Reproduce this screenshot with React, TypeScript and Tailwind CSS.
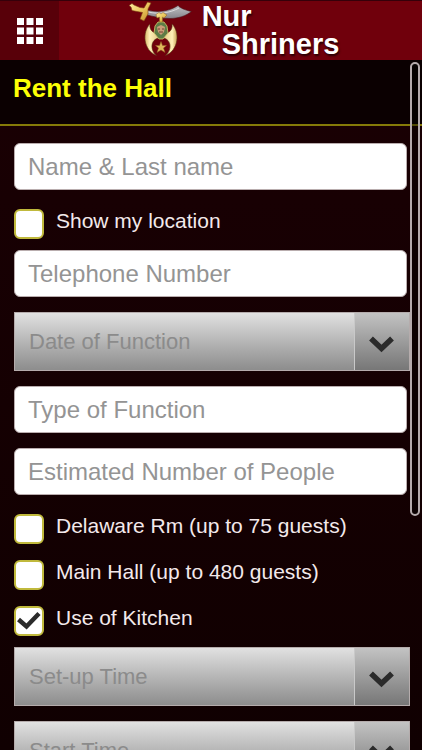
import { useState } from "react";

function MenuIcon() {
  return (
    <svg viewBox="0 0 26 26" className="size-[26px]" fill="#fff" aria-hidden="true">
      {[0, 9.5, 19].map((y) =>
        [0, 9.5, 19].map((x) => <rect key={`${x}-${y}`} x={x} y={y} width="7" height="7" />)
      )}
    </svg>
  );
}

function Emblem() {
  return (
    <svg viewBox="0 0 66 60" className="h-[60px] w-[66px] shrink-0" aria-hidden="true">
      <defs>
        <linearGradient id="gold" x1="0" y1="0" x2="1" y2="1">
          <stop offset="0" stopColor="#fff0a8" />
          <stop offset="0.5" stopColor="#eac65c" />
          <stop offset="1" stopColor="#c08a28" />
        </linearGradient>
        <linearGradient id="steel" x1="0" y1="0" x2="0" y2="1">
          <stop offset="0" stopColor="#b9b9bd" />
          <stop offset="0.5" stopColor="#a3a3a8" />
          <stop offset="1" stopColor="#85838a" />
        </linearGradient>
        <linearGradient id="horn" x1="0" y1="0" x2="1" y2="0">
          <stop offset="0" stopColor="#d9b76a" />
          <stop offset="0.15" stopColor="#fff0b8" />
          <stop offset="0.5" stopColor="#dcc078" />
          <stop offset="0.85" stopColor="#fff0b8" />
          <stop offset="1" stopColor="#c9a256" />
        </linearGradient>
      </defs>
      <path d="M19 9C30 12 42 10 50 4.500C52 7 57 9 63.500 10.500C58 15 50 17.500 42 17.500C33 17.500 25 15.500 19 14Z" fill="url(#steel)" stroke="#4a1018" strokeWidth=".6" />
      <path d="M20 11C31 13.500 42 12 51 7" fill="none" stroke="#dadade" strokeWidth="1" />
      <path d="M1 4.500L4 2.500L6 4L12 6.500L16 7L19.500 1L23 2L20 8L20 13L16 20L12 18L14.500 11.500L9 10.500L4 9.500L3 6Z" fill="url(#gold)" stroke="#7c3d14" strokeWidth=".6" />
      <path d="M22 23C14 31 15 49 28.500 54.500C21 48 23 37 33 36.500C43 37 45 48 37.500 54.500C51 49 52 31 44 23C45 29 41 33 33 33C25 33 21 29 22 23Z" fill="url(#horn)" stroke="#573014" strokeWidth=".6" />
      <path d="M27 25L30 21H36L39 25L40 32L35 38H31L26 32Z" fill="#5d7c46" stroke="#d5c66c" strokeWidth=".8" />
      <path d="M29 26L33 24L37 26L36 31L33 34L30 31Z" fill="#c99c77" />
      <path d="M30 28H32M34 28H36M31 31H35" stroke="#5c2b1e" strokeWidth=".8" />
      <path d="M28 13.500L31 11.500L33 13L35 11.500L39 14L36 17L34.500 16V21H31.500V16L29 17Z" fill="url(#gold)" stroke="#8a611f" strokeWidth=".5" />
      <path d="M33 40.500L34.500 44.500H38.500L35.500 47L37 51.500L33 49L29 51.500L30.500 47L27.500 44.500H31.500Z" fill="#dfb75b" stroke="#8b5a20" strokeWidth=".5" />
    </svg>
  );
}

function TextField({ label, type = "text" }: { label: string; type?: string }) {
  return (
    <input
      type={type}
      aria-label={label}
      placeholder={label}
      className="mr-[3px] h-[47px] min-w-0 rounded-md border border-[#b9adae] bg-white px-[13px] text-2xl text-[#333] outline-none placeholder:text-[#949494]"
    />
  );
}

function SelectField({ label, options }: { label: string; options: string[] }) {
  return (
    <div className="relative h-[59px] shrink-0">
      <select
        aria-label={label}
        defaultValue=""
        className="size-full appearance-none rounded-none border border-[#b5acac] bg-linear-to-b from-[#e1e1e1] to-[#8d8d8d] pr-16 pl-3.5 text-[22px] text-[#8b8b8b] outline-none"
      >
        <option value="">{label}</option>
        {options.map((option) => (
          <option key={option}>{option}</option>
        ))}
      </select>
      <div className="pointer-events-none absolute inset-y-px right-px flex w-[55px] items-center justify-center border-l border-[#c9c9c9] bg-linear-to-b from-[#c3c3c3] to-[#777]">
        <svg viewBox="0 0 26 18" className="mt-1 h-[18px] w-[26px]" fill="none" aria-hidden="true">
          <path d="M2 3.500L12.500 13.500L23 3.500" stroke="#2b2b2b" strokeWidth="5.500" />
        </svg>
      </div>
    </div>
  );
}

function CheckField({ label, initial = false }: { label: string; initial?: boolean }) {
  const [checked, setChecked] = useState(initial);
  return (
    <label className="flex h-[30px] gap-3 text-[21px] leading-6 text-[#f3e9eb]">
      <span className="relative size-[30px] shrink-0">
        <input
          type="checkbox"
          checked={checked}
          onChange={(e) => setChecked(e.target.checked)}
          className="block size-full appearance-none rounded-md border-2 border-[#c0b93c] bg-white"
        />
        {checked && (
          <svg viewBox="0 0 30 30" className="pointer-events-none absolute inset-0" fill="none" aria-hidden="true">
            <path d="M4.500 13.500L12.500 20.500L25 7.500" stroke="#2b2b2b" strokeWidth="4.500" />
          </svg>
        )}
      </span>
      <span>{label}</span>
    </label>
  );
}

const times = ["8:00 AM", "12:00 PM", "4:00 PM", "8:00 PM"];

export default function App() {
  return (
    <div className="relative flex h-screen flex-col overflow-hidden bg-linear-to-b from-[#1b0004] to-[#100001] font-['Liberation_Sans',Arial,sans-serif]">
      <header className="flex h-[60px] shrink-0 border-t border-[#35000a] bg-[#70000c]">
        <button type="button" aria-label="Menu" className="flex w-[59px] items-center justify-center bg-[#580009]">
          <MenuIcon />
        </button>
        <a href="#" className="flex flex-1 items-center justify-center gap-2 pr-3.5 text-[29px] leading-7 font-bold text-white [text-shadow:1px_2px_2px_#2a0005]">
          <Emblem />
          <span className="flex flex-col pb-0.5">
            <span>Nur</span>
            <span className="pl-5">Shriners</span>
          </span>
        </a>
      </header>

      <main className="flex-1 overflow-y-auto [scrollbar-width:none]">
        <h1 className="flex h-[66px] items-center border-b-2 border-[#857a08] bg-[#0b0001] px-[13px] pb-2 text-[26px] font-bold text-[#fdff05]">
          Rent the Hall
        </h1>
        <form className="flex flex-col pr-3 pb-6 pl-3.5">
          <div className="flex flex-col pt-[17px]">
            <TextField label="Name & Last name" />
          </div>
          <div className="pt-[19px] pb-[11px]">
            <CheckField label="Show my location" />
          </div>
          <div className="flex flex-col gap-[15px]">
            <TextField label="Telephone Number" type="tel" />
            <SelectField label="Date of Function" options={["This month", "Next month"]} />
            <TextField label="Type of Function" />
            <TextField label="Estimated Number of People" />
          </div>
          <div className="flex flex-col gap-4 pt-[19px] pb-[11px]">
            <CheckField label="Delaware Rm (up to 75 guests)" />
            <CheckField label="Main Hall (up to 480 guests)" />
            <CheckField label="Use of Kitchen" initial />
          </div>
          <div className="flex flex-col gap-[15px]">
            <SelectField label="Set-up Time" options={times} />
            <SelectField label="Start Time" options={times} />
          </div>
        </form>
      </main>

      <div className="pointer-events-none absolute top-[62px] right-0.5 h-[454px] w-[10px] rounded-full border-2 border-[#b5aaac] bg-black/40" />
    </div>
  );
}
